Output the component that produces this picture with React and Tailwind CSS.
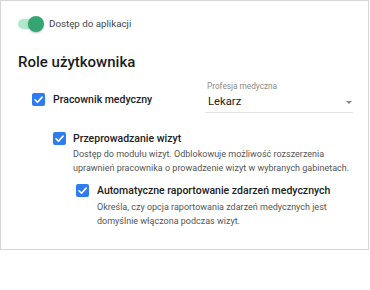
import React from 'react'

function Check() {
  return (
    <span className="flex h-[13px] w-[13px] shrink-0 items-center justify-center rounded-[2px] bg-[#2f7cf0]">
      <svg width="11" height="11" viewBox="0 0 12 12" fill="none">
        <path d="M2.2 6.3 L4.9 9 L9.9 3.4" stroke="white" strokeWidth="1.8" strokeLinecap="round" strokeLinejoin="round" />
      </svg>
    </span>
  )
}

export default function App() {
  return (
    <div className="h-[290px] w-[370px] bg-white font-['Roboto',sans-serif] text-[#212121]">
      <div className="h-[250px] w-[369px] border border-[#d6d6d6] bg-white">
        {/* dostep */}
        <div className="mt-[15px] flex h-[16px] items-center pl-[16px]">
          <div className="relative h-[16px] w-[28px]">
            <div className="absolute left-[1px] top-[3px] h-[10px] w-[24px] rounded-full bg-[#b0e8cd]" />
            <div className="absolute left-[11px] top-0 h-[16px] w-[16px] rounded-full bg-[#35a673] shadow-[0_1px_2px_rgba(0,0,0,0.25)]" />
          </div>
          <span className="ml-[4px] text-[9.75px] text-[#444]">Dostęp do aplikacji</span>
        </div>

        <h1 className="mt-[20px] pl-[17px] text-[15px] font-medium leading-[20px] text-[#1c1c1c]">Role użytkownika</h1>

        <div className="mt-[8px] flex items-start">
          <div className="ml-[31px] mt-[13px] flex h-[13px] items-center gap-[8px]">
            <Check />
            <span className="text-[10.5px] font-medium">Pracownik medyczny</span>
          </div>
          <div className="ml-auto mr-[15px] w-[148px] border-b border-[#e2e2e2] pl-[2px]">
            <div className="text-[8.25px] leading-[12px] text-[#8a8a8a]">Profesja medyczna</div>
            <div className="flex h-[20px] items-center justify-between pr-[1px]">
              <span className="pl-[1px] text-[11.25px] text-[#222]">Lekarz</span>
              <span className="h-0 w-0 border-x-[3.5px] border-t-[3.5px] border-x-transparent border-t-[#888]" />
            </div>
          </div>
        </div>

        <div className="ml-[52px] mt-[19px]">
          <div className="flex h-[13px] items-center gap-[7px]">
            <Check />
            <span className="text-[10.5px] font-medium">Przeprowadzanie wizyt</span>
          </div>
          <p className="mt-[3px] whitespace-nowrap pl-[20px] text-[9px] leading-[13.5px] text-[#555]">
            Dostęp do modułu wizyt. Odblokowuje możliwość rozszerzenia
            <br />
            uprawnień pracownika o prowadzenie wizyt w wybranych gabinetach.
          </p>
        </div>

        <div className="ml-[75px] mt-[9px]">
          <div className="flex h-[13px] items-center gap-[8px]">
            <Check />
            <span className="text-[10.5px] font-medium">Automatyczne raportowanie zdarzeń medycznych</span>
          </div>
          <p className="mt-[4px] whitespace-nowrap pl-[21px] text-[9px] leading-[13.5px] text-[#555]">
            Określa, czy opcja raportowania zdarzeń medycznych jest
            <br />
            domyślnie włączona podczas wizyt.
          </p>
        </div>
      </div>
    </div>
  )
}
